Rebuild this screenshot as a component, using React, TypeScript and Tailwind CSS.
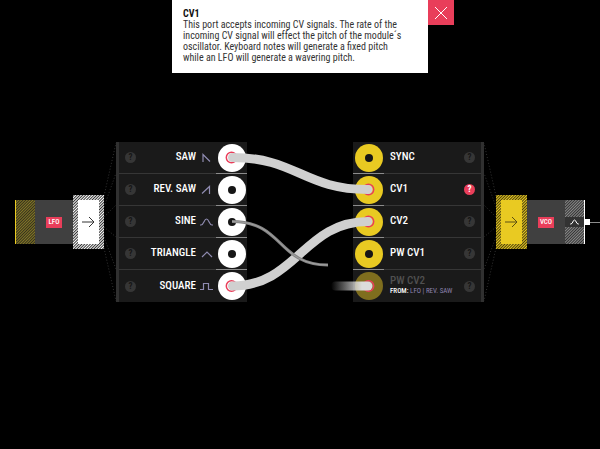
import React, { useState } from "react";
import { clsx } from "clsx";

type Port = {
  id: string;
  name: string;
  wave?: string;
  state: "open" | "cabled" | "ghost";
  from?: { module: string; port: string };
  help?: string;
};

const SINE = "M0 9H1C4 9 4 3 6.5 3S9 9 12 9H13";

const outputs: Port[] = [
  { id: "saw", name: "SAW", wave: "M3 10V2.5L10 9.5", state: "cabled" },
  { id: "rev-saw", name: "REV. SAW", wave: "M2 9.5L9.5 2.5V10", state: "open" },
  { id: "sine", name: "SINE", wave: SINE, state: "open" },
  { id: "triangle", name: "TRIANGLE", wave: "M2 9L7 4L12 9", state: "open" },
  {
    id: "square",
    name: "SQUARE",
    wave: "M0 9.5H3.5V3.5H8.5V9.5H13",
    state: "cabled",
  },
];

const inputs: Port[] = [
  { id: "sync", name: "SYNC", state: "open" },
  {
    id: "cv1",
    name: "CV1",
    state: "cabled",
    help: "This port accepts incoming CV signals. The rate of the incoming CV signal will effect the pitch of the module´s oscillator. Keyboard notes will generate a fixed pitch while an LFO will generate a wavering pitch.",
  },
  { id: "cv2", name: "CV2", state: "cabled" },
  { id: "pw-cv1", name: "PW CV1", state: "open" },
  {
    id: "pw-cv2",
    name: "PW CV2",
    state: "ghost",
    from: { module: "LFO", port: "REV. SAW" },
  },
];

function Socket({ port, yellow }: { port: Port; yellow?: boolean }) {
  return (
    <div className="flex w-[31px] shrink-0 items-center justify-center border-b border-[#8c8c8c] group-last:border-b-0">
      <button
        aria-label={`${port.name} socket`}
        className={clsx(
          "flex size-7 items-center justify-center rounded-full",
          !yellow && "bg-white",
          yellow && port.state !== "ghost" && "bg-[#e9ca22]",
          port.state === "ghost" && "bg-[#7f6e1e]"
        )}
      >
        {port.state === "open" && (
          <span className="size-2 rounded-full bg-[#161616]" />
        )}
      </button>
    </div>
  );
}

function HelpButton({
  name,
  active,
  onClick,
}: {
  name: string;
  active: boolean;
  onClick: () => void;
}) {
  return (
    <button
      aria-label={`About ${name}`}
      onClick={onClick}
      className={clsx(
        "flex size-[11px] shrink-0 items-center justify-center rounded-full text-[9px] leading-[11px] font-bold",
        active ? "bg-[#e93e5a] text-white" : "bg-[#363636] text-[#161616]"
      )}
    >
      ?
    </button>
  );
}

// Dotted fan that joins a port block to the rows of its panel
function Fan({ flip }: { flip?: boolean }) {
  const ends = [1, 31, 63, 95, 127, 159];
  const starts = [54, 65, 75, 85, 95, 106];
  return (
    <svg
      aria-hidden="true"
      viewBox="0 0 12 160"
      className={clsx("h-40 w-3 shrink-0", flip && "-scale-x-100")}
      stroke="#333"
      strokeDasharray="1 2"
    >
      {ends.map((y, i) => (
        <line key={y} x1="0" y1={starts[i]} x2="12" y2={y} />
      ))}
    </svg>
  );
}

function PortBlock({ yellow }: { yellow?: boolean }) {
  return (
    <button
      aria-label={yellow ? "Open VCO inputs" : "Open LFO outputs"}
      className={clsx(
        "h-[54px] w-[31px] shrink-0 p-[5px]",
        yellow
          ? "bg-[repeating-linear-gradient(135deg,#e9ca22_0,#4a400e_1px,#e9ca22_2px)]"
          : "bg-[repeating-linear-gradient(135deg,#ffffff_0,#333333_1px,#ffffff_2px)]"
      )}
    >
      <span
        className={clsx(
          "flex h-full items-center justify-center",
          yellow ? "bg-[#e9ca22]" : "bg-white"
        )}
      >
        <svg
          aria-hidden="true"
          viewBox="0 0 13 12"
          className="h-3 w-[13px]"
          fill="none"
          stroke={yellow ? "#5c5012" : "#333"}
        >
          <path d="M0 6H12M7 1L12 6L7 11" />
        </svg>
      </span>
    </button>
  );
}

function Badge({ children }: { children: React.ReactNode }) {
  return (
    <div className="flex flex-1 items-center justify-center">
      <span className="w-4 bg-[#e93e5a] text-center text-[7px] leading-[11px] font-medium">
        {children}
      </span>
    </div>
  );
}

function Cables() {
  return (
    <svg
      aria-hidden="true"
      viewBox="215 142 170 160"
      className="pointer-events-none absolute inset-y-0 -left-8 h-40 w-[170px]"
      fill="none"
      strokeLinecap="round"
    >
      <defs>
        <linearGradient
          id="fade"
          gradientUnits="userSpaceOnUse"
          x1="331"
          y1="0"
          x2="362"
          y2="0"
        >
          <stop offset="0" stopColor="#d2d2d2" stopOpacity="0" />
          <stop offset="1" stopColor="#dcdcdc" />
        </linearGradient>
      </defs>
      <g stroke="#e93e5a" strokeWidth="1.5">
        <circle cx="231.5" cy="157.5" r="5.2" />
        <circle cx="231.5" cy="286" r="5.2" />
        <circle cx="368.5" cy="189.5" r="5.2" />
        <circle cx="368.5" cy="221.5" r="5.2" />
        <circle cx="368.5" cy="286" r="5.2" />
      </g>
      <g stroke="#d0d0d0" strokeWidth="9">
        <path d="M232.5 157.5C296 157.5 304 189.5 368 189.5" />
        <path d="M232.5 286C296 286 304 221.5 368 221.5" />
      </g>
      <rect
        x="331"
        y="281.5"
        width="41.5"
        height="9"
        rx="4.5"
        fill="url(#fade)"
      />
      <path
        d="M232 221.5C284 221.5 277 265 328 265"
        stroke="#858585"
        strokeWidth="3"
        strokeLinecap="butt"
      />
      <path
        d="M232 221.5C284 221.5 277 265 328 265"
        stroke="#a0a0a0"
        strokeLinecap="butt"
      />
    </svg>
  );
}

export default function PatchView() {
  const [help, setHelp] = useState<string | null>("cv1");
  const helpPort = inputs.find((p) => p.id === help && p.help);

  return (
    <div className="flex min-h-screen flex-col items-center overflow-x-hidden bg-black font-['Roboto_Condensed',Roboto,sans-serif] text-white">
      <div className="min-h-[73px]">
        {helpPort && (
          <section className="relative w-64 bg-white pt-2 pr-[22px] pb-[10px] pl-[11px] text-[10px] leading-[11px] text-[#333]">
            <h1 className="font-bold text-[#111]">{helpPort.name}</h1>
            <p>{helpPort.help}</p>
            <button
              aria-label="Close"
              onClick={() => setHelp(null)}
              className="absolute top-0 left-full flex h-[25px] w-[26px] items-center justify-center bg-[#e93e5a]"
            >
              <svg
                aria-hidden="true"
                viewBox="0 0 14 14"
                className="size-3.5"
                stroke="#fff"
              >
                <path d="M1 1L13 13M13 1L1 13" />
              </svg>
            </button>
          </section>
        )}
      </div>

      <main className="mt-[69px] flex w-full items-center">
        <div className="flex-1" />

        {/* LFO */}
        <div className="flex h-11 w-[58px] shrink-0 border-l border-[#e9ca22] bg-[#404040]">
          <div className="w-[19px] bg-[repeating-linear-gradient(135deg,#857827_0,#33301c_1px,#857827_2px)]" />
          <Badge>LFO</Badge>
        </div>
        <PortBlock />
        <Fan />
        <ul className="w-[131px] shrink-0 border-l-3 border-[#303030] bg-[#1a1a1a]">
          {outputs.map((port) => (
            <li key={port.id} className="group flex h-8">
              <div className="flex flex-1 items-center border-b border-[#363636] pr-[3px] pl-[6px] group-last:border-b-0">
                <HelpButton
                  name={port.name}
                  active={help === port.id}
                  onClick={() => setHelp(port.id)}
                />
                <span className="flex-1 text-right text-[11px] font-medium">
                  {port.name}
                </span>
                <svg
                  aria-hidden="true"
                  viewBox="0 0 13 12"
                  className="ml-1 h-3 w-[13px]"
                  fill="none"
                  stroke="#8f8bb0"
                  strokeWidth="1.2"
                >
                  <path d={port.wave} />
                </svg>
              </div>
              <Socket port={port} />
            </li>
          ))}
        </ul>

        <div className="relative z-10 h-40 w-[106px] shrink-0">
          <Cables />
        </div>

        {/* VCO */}
        <ul className="w-[131px] shrink-0 border-r-3 border-[#303030] bg-[#1a1a1a]">
          {inputs.map((port) => (
            <li key={port.id} className="group flex h-8">
              <Socket port={port} yellow />
              <div className="flex flex-1 items-center border-b border-[#363636] px-[6px] group-last:border-b-0">
                <div className="flex-1 whitespace-nowrap">
                  <p
                    className={clsx(
                      "text-[11px] font-medium",
                      port.from && "leading-[10px] text-[#505050]"
                    )}
                  >
                    {port.name}
                  </p>
                  {port.from && (
                    <p className="text-[7px] leading-[10px] text-[#8d82ad]">
                      <b className="font-medium text-white">FROM:</b>{" "}
                      {port.from.module} | {port.from.port}
                    </p>
                  )}
                </div>
                <HelpButton
                  name={port.name}
                  active={help === port.id}
                  onClick={() => setHelp(port.id)}
                />
              </div>
            </li>
          ))}
        </ul>
        <Fan flip />
        <PortBlock yellow />
        <div className="flex h-11 w-[58px] shrink-0 border-r border-white bg-[#404040]">
          <Badge>VCO</Badge>
          <div className="flex w-[19px] items-center bg-[repeating-linear-gradient(135deg,#8a8a8a_0,#333333_1px,#8a8a8a_2px)]">
            <div className="flex h-[10px] w-full items-center justify-center bg-[#333]">
              <svg
                aria-hidden="true"
                viewBox="0 0 13 12"
                className="h-2 w-[9px]"
                fill="none"
                stroke="#fff"
                strokeWidth="1.5"
              >
                <path d={SINE} />
              </svg>
            </div>
          </div>
        </div>
        <div className="flex flex-1 items-center">
          <span className="h-[6px] w-[5px] bg-white" />
          <span className="h-px flex-1 bg-[#8c8c8c]" />
        </div>
      </main>
    </div>
  );
}
